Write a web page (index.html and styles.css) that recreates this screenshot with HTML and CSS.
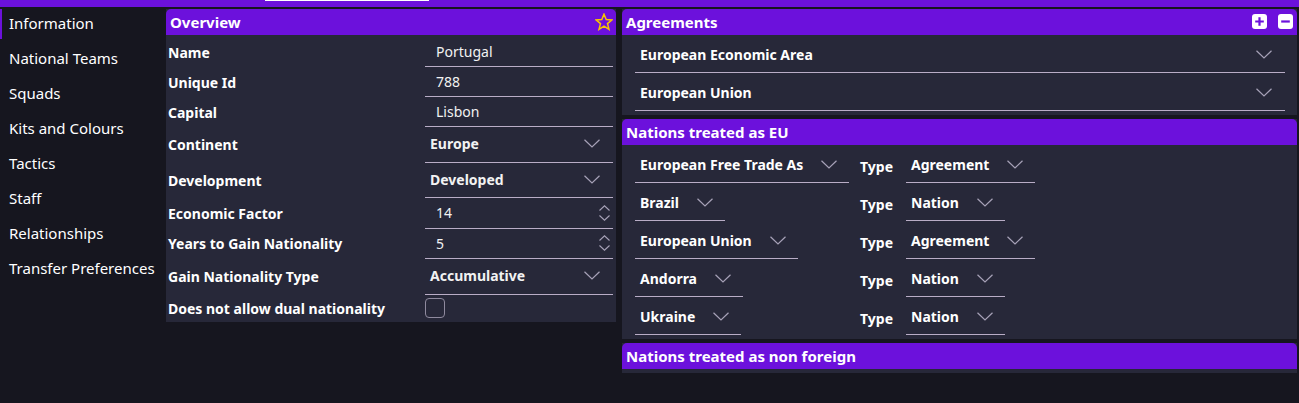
FILE: index.html
```html
<!DOCTYPE html>
<html lang="en">
<head>
<meta charset="utf-8">
<title>Nation Editor</title>
<link rel="stylesheet" href="styles.css">
</head>
<body>
<div class="topbar"><div class="tab-line"></div></div>
<div class="app">
  <nav class="sidebar">
    <div class="nav-item active">Information</div>
    <div class="nav-item">National Teams</div>
    <div class="nav-item">Squads</div>
    <div class="nav-item">Kits and Colours</div>
    <div class="nav-item">Tactics</div>
    <div class="nav-item">Staff</div>
    <div class="nav-item">Relationships</div>
    <div class="nav-item">Transfer Preferences</div>
  </nav>

  <section class="panel overview">
    <header class="panel-head">
      <span class="panel-title">Overview</span>
      <svg class="star" width="18" height="18" viewBox="0 0 18 18"><polygon points="9,1.2 11.2,6.6 17,6.9 12.5,10.6 14,16.4 9,13.2 4,16.4 5.5,10.6 1,6.9 6.8,6.6" fill="none" stroke="#f7c600" stroke-width="1.5" stroke-linejoin="miter"/></svg>
    </header>
    <div class="form">
      <div class="row row-text"><div class="label">Name</div><div class="field f-text">Portugal</div></div>
      <div class="row row-text"><div class="label">Unique Id</div><div class="field f-text">788</div></div>
      <div class="row row-text"><div class="label">Capital</div><div class="field f-text">Lisbon</div></div>
      <div class="row row-select"><div class="label">Continent</div><div class="field f-select"><span>Europe</span><svg class="chev" width="16" height="9" viewBox="0 0 16 9"><polyline points="0.5,0.8 8,8 15.5,0.8" fill="none" stroke="#a7a2b8" stroke-width="1.2"/></svg></div></div>
      <div class="row row-select"><div class="label">Development</div><div class="field f-select"><span>Developed</span><svg class="chev" width="16" height="9" viewBox="0 0 16 9"><polyline points="0.5,0.8 8,8 15.5,0.8" fill="none" stroke="#a7a2b8" stroke-width="1.2"/></svg></div></div>
      <div class="row row-num"><div class="label">Economic Factor</div><div class="field f-num"><span>14</span><span class="spin"><svg width="11" height="6" viewBox="0 0 11 6"><polyline points="0.5,5.5 5.5,0.8 10.5,5.5" fill="none" stroke="#a7a2b8" stroke-width="1.1"/></svg><svg width="11" height="6" viewBox="0 0 11 6"><polyline points="0.5,0.5 5.5,5.2 10.5,0.5" fill="none" stroke="#a7a2b8" stroke-width="1.1"/></svg></span></div></div>
      <div class="row row-num"><div class="label">Years to Gain Nationality</div><div class="field f-num"><span>5</span><span class="spin"><svg width="11" height="6" viewBox="0 0 11 6"><polyline points="0.5,5.5 5.5,0.8 10.5,5.5" fill="none" stroke="#a7a2b8" stroke-width="1.1"/></svg><svg width="11" height="6" viewBox="0 0 11 6"><polyline points="0.5,0.5 5.5,5.2 10.5,0.5" fill="none" stroke="#a7a2b8" stroke-width="1.1"/></svg></span></div></div>
      <div class="row row-select"><div class="label">Gain Nationality Type</div><div class="field f-select"><span>Accumulative</span><svg class="chev" width="16" height="9" viewBox="0 0 16 9"><polyline points="0.5,0.8 8,8 15.5,0.8" fill="none" stroke="#a7a2b8" stroke-width="1.2"/></svg></div></div>
      <div class="row row-check"><div class="label">Does not allow dual nationality</div><div class="check-cell"><span class="checkbox"></span></div></div>
    </div>
  </section>

  <div class="right-col">
    <section class="panel">
      <header class="panel-head">
        <span class="panel-title">Agreements</span>
        <span class="head-btns">
          <span class="sq-btn"><svg width="15" height="15" viewBox="0 0 15 15"><path d="M7.5 3.2v8.6M3.2 7.5h8.6" stroke="#6c11dc" stroke-width="2.2"/></svg></span>
          <span class="sq-btn"><svg width="15" height="15" viewBox="0 0 15 15"><path d="M3.2 7.5h8.6" stroke="#6c11dc" stroke-width="2.2"/></svg></span>
        </span>
      </header>
      <div class="list-body">
        <div class="agree-row"><span>European Economic Area</span><svg class="chev" width="16" height="9" viewBox="0 0 16 9"><polyline points="0.5,0.8 8,8 15.5,0.8" fill="none" stroke="#a7a2b8" stroke-width="1.2"/></svg></div>
        <div class="agree-row"><span>European Union</span><svg class="chev" width="16" height="9" viewBox="0 0 16 9"><polyline points="0.5,0.8 8,8 15.5,0.8" fill="none" stroke="#a7a2b8" stroke-width="1.2"/></svg></div>
      </div>
    </section>

    <section class="panel">
      <header class="panel-head"><span class="panel-title">Nations treated as EU</span></header>
      <div class="list-body">
        <div class="eu-row">
          <div class="eu-left"><div class="sel"><span>European Free Trade As</span><svg class="chev" width="16" height="9" viewBox="0 0 16 9"><polyline points="0.5,0.8 8,8 15.5,0.8" fill="none" stroke="#a7a2b8" stroke-width="1.2"/></svg></div></div>
          <div class="type-label">Type</div>
          <div class="sel"><span>Agreement</span><svg class="chev" width="16" height="9" viewBox="0 0 16 9"><polyline points="0.5,0.8 8,8 15.5,0.8" fill="none" stroke="#a7a2b8" stroke-width="1.2"/></svg></div>
        </div>
        <div class="eu-row">
          <div class="eu-left"><div class="sel"><span>Brazil</span><svg class="chev" width="16" height="9" viewBox="0 0 16 9"><polyline points="0.5,0.8 8,8 15.5,0.8" fill="none" stroke="#a7a2b8" stroke-width="1.2"/></svg></div></div>
          <div class="type-label">Type</div>
          <div class="sel"><span>Nation</span><svg class="chev" width="16" height="9" viewBox="0 0 16 9"><polyline points="0.5,0.8 8,8 15.5,0.8" fill="none" stroke="#a7a2b8" stroke-width="1.2"/></svg></div>
        </div>
        <div class="eu-row">
          <div class="eu-left"><div class="sel"><span>European Union</span><svg class="chev" width="16" height="9" viewBox="0 0 16 9"><polyline points="0.5,0.8 8,8 15.5,0.8" fill="none" stroke="#a7a2b8" stroke-width="1.2"/></svg></div></div>
          <div class="type-label">Type</div>
          <div class="sel"><span>Agreement</span><svg class="chev" width="16" height="9" viewBox="0 0 16 9"><polyline points="0.5,0.8 8,8 15.5,0.8" fill="none" stroke="#a7a2b8" stroke-width="1.2"/></svg></div>
        </div>
        <div class="eu-row">
          <div class="eu-left"><div class="sel"><span>Andorra</span><svg class="chev" width="16" height="9" viewBox="0 0 16 9"><polyline points="0.5,0.8 8,8 15.5,0.8" fill="none" stroke="#a7a2b8" stroke-width="1.2"/></svg></div></div>
          <div class="type-label">Type</div>
          <div class="sel"><span>Nation</span><svg class="chev" width="16" height="9" viewBox="0 0 16 9"><polyline points="0.5,0.8 8,8 15.5,0.8" fill="none" stroke="#a7a2b8" stroke-width="1.2"/></svg></div>
        </div>
        <div class="eu-row">
          <div class="eu-left"><div class="sel"><span>Ukraine</span><svg class="chev" width="16" height="9" viewBox="0 0 16 9"><polyline points="0.5,0.8 8,8 15.5,0.8" fill="none" stroke="#a7a2b8" stroke-width="1.2"/></svg></div></div>
          <div class="type-label">Type</div>
          <div class="sel"><span>Nation</span><svg class="chev" width="16" height="9" viewBox="0 0 16 9"><polyline points="0.5,0.8 8,8 15.5,0.8" fill="none" stroke="#a7a2b8" stroke-width="1.2"/></svg></div>
        </div>
      </div>
    </section>

    <section class="panel">
      <header class="panel-head"><span class="panel-title">Nations treated as non foreign</span></header>
      <div class="empty-body"></div>
    </section>
  </div>
</div>
</body>
</html>
```

FILE: styles.css
```css
* { box-sizing: border-box; }
html, body {
  margin: 0;
  padding: 0;
  background: #16161f;
  color: #ffffff;
  font-family: "Noto Sans", "Open Sans", sans-serif;
  font-size: 14px;
}
.topbar {
  height: 7px;
  background: #6c11dc;
}
.tab-line {
  margin-left: 265px;
  width: 164px;
  height: 1px;
  background: #ffffff;
}
.app {
  display: flex;
  align-items: flex-start;
  padding-top: 2px;
  padding-right: 2px;
}
.sidebar {
  width: 166px;
  flex: none;
}
.nav-item {
  height: 30px;
  line-height: 28px;
  margin-bottom: 5px;
  padding-left: 9px;
  font-size: 15px;
  color: #ffffff;
  white-space: nowrap;
}
.nav-item.active {
  box-shadow: inset 2px 0 0 #6c11dc;
}
.panel {
  background: #272839;
}
.panel-head {
  height: 26px;
  background: #6c11dc;
  border-radius: 5px 5px 0 0;
  display: flex;
  align-items: center;
  justify-content: space-between;
  padding: 0 4px 1px 4px;
}
.panel-title {
  font-weight: 700;
  font-size: 15px;
  color: #ffffff;
}
.overview {
  width: 450px;
  flex: none;
}
.overview .panel-head { padding-right: 3px; }
.star { display: block; }
.form {
  padding: 2px 3px 0 2px;
}
.row {
  display: grid;
  grid-template-columns: 257px 188px;
  align-items: stretch;
}
.row-text { height: 30px; }
.row-select { height: 35.5px; }
.row-num { height: 30.5px; }
.row-check { height: 27.5px; }
.label {
  display: flex;
  align-items: center;
  font-weight: 700;
  font-size: 14px;
  white-space: nowrap;
}
.field {
  display: flex;
  align-items: center;
  border-bottom: 1px solid #b9adc6;
  color: #f2f2f2;
  font-size: 14px;
}
.f-text { padding-left: 11px; }
.f-num {
  padding-left: 11px;
  padding-right: 3px;
  justify-content: space-between;
}
.f-select {
  padding-left: 5px;
  padding-right: 13px;
  justify-content: space-between;
  font-weight: 700;
  padding-bottom: 1px;
}
.spin {
  display: flex;
  flex-direction: column;
  gap: 4px;
}
.spin svg { display: block; }
.chev { display: block; flex: none; }
.check-cell {
  display: flex;
  align-items: center;
}
.checkbox {
  width: 20px;
  height: 20px;
  border: 1.5px solid #8f8a9e;
  border-radius: 4px;
}
.right-col {
  flex: 1;
  margin-left: 6px;
  display: flex;
  flex-direction: column;
  gap: 4px;
}
.head-btns {
  display: flex;
  gap: 11px;
}
.sq-btn {
  width: 15px;
  height: 15px;
  background: #ffffff;
  border-radius: 3px;
  display: block;
}
.sq-btn svg { display: block; }
.list-body {
  padding: 0 12px 4px 13px;
}
.agree-row {
  height: 38px;
  display: flex;
  align-items: center;
  justify-content: space-between;
  padding: 2px 13px 0 5px;
  border-bottom: 1px solid #b9adc6;
  font-weight: 700;
}
.eu-row {
  height: 38px;
  display: flex;
  align-items: stretch;
}
.eu-left {
  width: 225px;
  display: flex;
}
.sel {
  display: flex;
  align-items: center;
  gap: 18px;
  padding: 2px 12px 0 5px;
  border-bottom: 1px solid #b9adc6;
  font-weight: 700;
  white-space: nowrap;
}
.type-label {
  width: 46px;
  display: flex;
  align-items: center;
  padding-top: 5px;
  font-weight: 700;
}
.empty-body {
  height: 4px;
}
```
